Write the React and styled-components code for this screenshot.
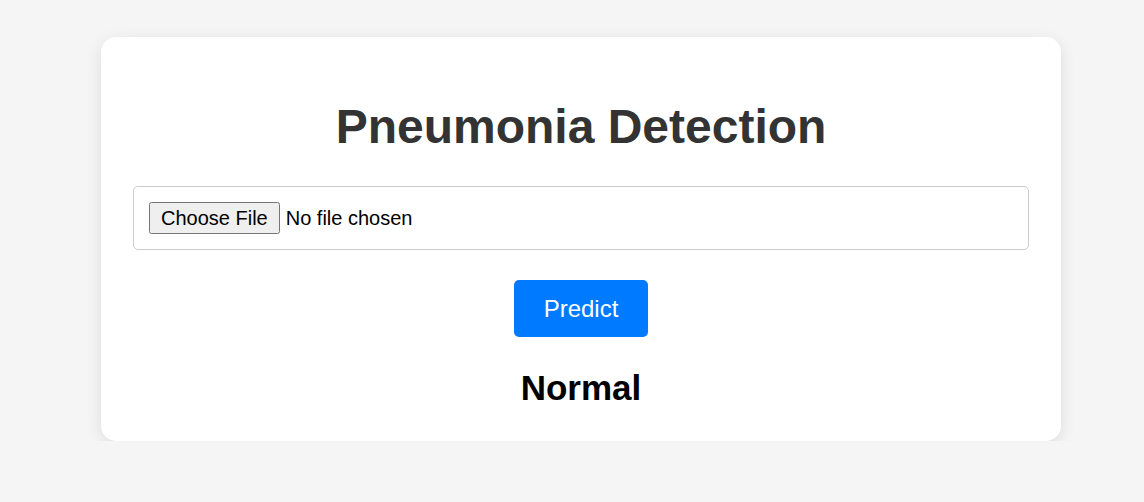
import React from "react";
import styled, { createGlobalStyle } from "styled-components";

const GlobalStyle = createGlobalStyle`
  body {
    margin: 0;
    background: #f5f5f5;
    font-family: "Liberation Sans", Arial, sans-serif;
  }
`;

const Page = styled.div`
  padding: 37px 0 0 18px;
  display: flex;
  justify-content: center;
`;

const Card = styled.div`
  width: 960px;
  box-sizing: border-box;
  background: #fff;
  border-radius: 15px;
  box-shadow: 0 4px 15px rgba(0, 0, 0, 0.1);
  padding: 30px 32px 33px;
  display: flex;
  flex-direction: column;
  align-items: center;
  text-align: center;
`;

const Title = styled.h1`
  font-size: 48px;
  color: #333;
  margin: 32px 0;
`;

const FileInput = styled.input`
  width: 100%;
  box-sizing: border-box;
  padding: 15px;
  border: 1px solid #ccc;
  border-radius: 5px;
  font-family: "Liberation Sans", Arial, sans-serif;
  font-size: 20px;
  text-align: left;
  &::file-selector-button {
    font-family: "Liberation Sans", Arial, sans-serif;
    font-size: 20px;
    padding: 3px 10px 2px;
    margin-right: 6px;
  }
`;

const PredictButton = styled.button`
  margin-top: 30px;
  padding: 15px 29.5px;
  line-height: 27px;
  background: #007bff;
  color: #fff;
  border: none;
  border-radius: 5px;
  font-family: "Liberation Sans", Arial, sans-serif;
  font-size: 24px;
  cursor: pointer;
`;

const Result = styled.h2`
  font-size: 35px;
  color: #000;
  margin: 31px 0 0;
`;

const App = () => {
  return (
    <>
      <GlobalStyle />
      <Page>
        <Card>
          <Title>Pneumonia Detection</Title>
          <FileInput type="file" accept="image/*" />
          <PredictButton>Predict</PredictButton>
          <Result>Normal</Result>
        </Card>
      </Page>
    </>
  );
};

export default App;
